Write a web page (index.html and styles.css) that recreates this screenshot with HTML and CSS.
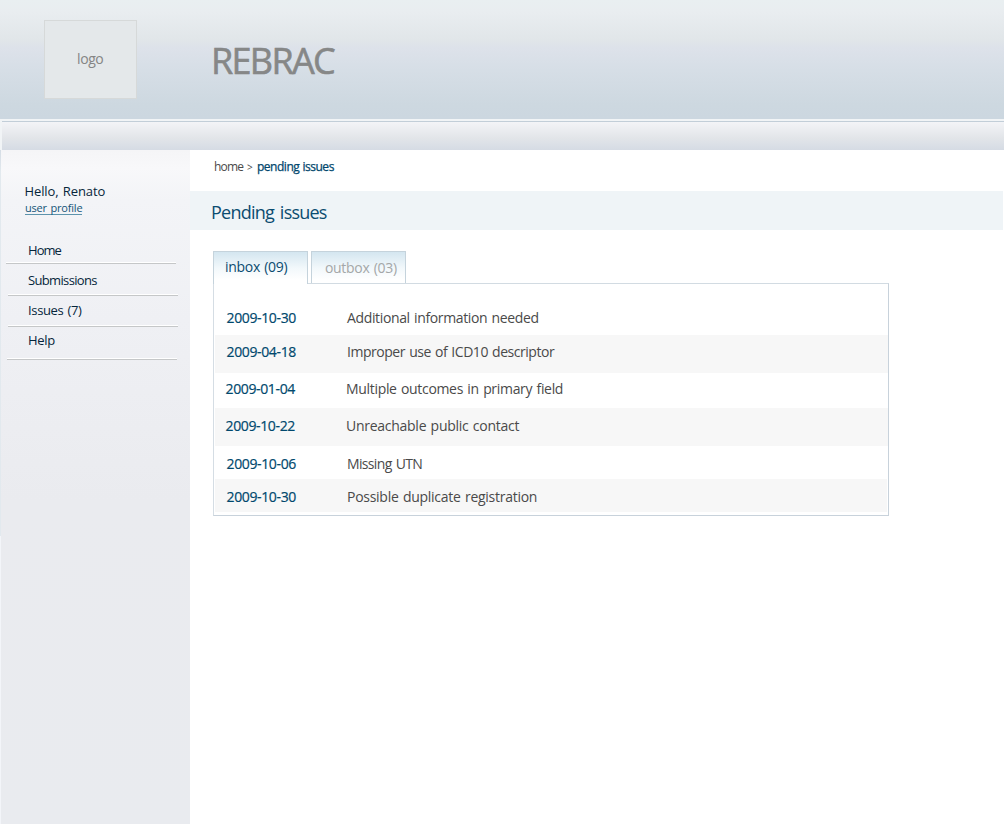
FILE: index.html
```html
<!DOCTYPE html>
<html lang="en">
<head>
<meta charset="utf-8">
<title>REBRAC - Pending issues</title>
<link rel="stylesheet" href="styles.css">
</head>
<body>
<header class="header">
  <div class="logo">logo</div>
  <h1 class="brand">REBRAC</h1>
</header>
<div class="bar"></div>
<div class="layout">
  <aside class="sidebar">
    <p class="hello">Hello, Renato</p>
    <a class="profile">user profile</a>
    <nav class="menu">
      <a class="item home">Home</a>
      <a class="item submissions">Submissions</a>
      <a class="item issues">Issues (7)</a>
      <a class="item help">Help</a>
    </nav>
  </aside>
  <main class="main">
    <div class="crumbs"><span class="crumb">home</span><span class="sep">&gt;</span><span class="current">pending issues</span></div>
    <h2 class="title">Pending issues</h2>
    <div class="tabs">
      <a class="tab active">inbox (09)</a>
      <a class="tab other">outbox (03)</a>
    </div>
    <div class="panel">
      <div class="row r1"><span class="date">2009-10-30</span><span class="text">Additional information needed</span></div>
      <div class="row r2"><span class="date">2009-04-18</span><span class="text">Improper use of ICD10 descriptor</span></div>
      <div class="row r3"><span class="date">2009-01-04</span><span class="text">Multiple outcomes in primary field</span></div>
      <div class="row r4"><span class="date">2009-10-22</span><span class="text">Unreachable public contact</span></div>
      <div class="row r5"><span class="date">2009-10-06</span><span class="text">Missing UTN</span></div>
      <div class="row r6"><span class="date">2009-10-30</span><span class="text">Possible duplicate registration</span></div>
    </div>
  </main>
</div>
</body>
</html>
```
FILE: styles.css
```css
* { box-sizing: border-box; }
body {
  margin: 0;
  height: 824px;
  overflow: hidden;
  display: flex;
  flex-direction: column;
  background: #fff;
  color: #4a4a4a;
  font: 14px/20px "Open Sans", "Noto Sans", sans-serif;
  white-space: nowrap;
}
h1, h2, p { margin: 0; font-weight: 400; }

.header {
  flex: none;
  height: 119px;
  display: flex;
  align-items: flex-start;
  padding: 20px 0 0 44px;
  background: linear-gradient(#e9eff1 0, #e9edf0 12px, #e1e6e9 40px, #dde2ea 48px, #d6dee6 70px, #cdd8e0 105px, #ccd7e0 119px);
}
.logo {
  width: 93px;
  height: 79px;
  padding: 28px 0 0 32px;
  border: 1px solid #d6d9d9;
  background: #e4e8ea;
  color: #858585;
  letter-spacing: -.4px;
}
.brand {
  margin: 18px 0 0 74px;
  font-size: 36px;
  line-height: 46px;
  letter-spacing: -1.7px;
  color: #868787;
  -webkit-text-stroke: .6px #868787;
}
.bar {
  flex: none;
  height: 31px;
  border-top: 2px solid #f1f4f6;
  border-left: 2px solid #f1f4f6;
  background: linear-gradient(#c2ced8 0 1px, #f3f4f7 1px, #e2e5e9 17px, #d5dbe4 100%);
}
.layout { flex: 1; display: flex; }
.sidebar {
  flex: none;
  width: 190px;
  padding-top: 31px;
  background:
    linear-gradient(#d5dde5 0, #e2e9ee 22px 386px, #f3f5f9 386px) left / 1px 100% no-repeat,
    linear-gradient(#f5f5f7 0, #f8f8fa 18px, #f3f4f7 50px, #eff0f4 170px, #eaebef 350px, #e9ebef 100%);
}
.hello { padding-left: 24.5px; font-size: 13px; letter-spacing: -.1px; word-spacing: 1px; color: #06263b; }
.profile {
  display: block;
  width: 57px;
  height: 15px;
  margin: -1px 0 0 25px;
  border-bottom: 1px solid #5d93ac;
  font-size: 11px;
  line-height: 16px;
  letter-spacing: -.2px;
  word-spacing: 1px;
  color: #145577;
}
.menu { padding: 25px 0 0 6px; }
.item {
  display: block;
  width: 170px;
  padding-left: 22px;
  font-size: 13px;
  color: #06263b;
  border-bottom: 1px solid #c5c7c8;
  box-shadow: inset 0 -1px #fff;
}
.home { height: 24px; letter-spacing: -.95px; }
.submissions { height: 32px; padding-top: 6px; margin-left: 2px; padding-left: 20px; letter-spacing: -.65px; }
.issues { height: 31px; padding-top: 4px; margin-left: 2px; padding-left: 20px; letter-spacing: -.35px; word-spacing: 1px; }
.help { height: 33px; padding-top: 3px; margin-left: 1px; padding-left: 21px; letter-spacing: -.3px; }

.main { flex: 1; }
.crumbs { height: 41px; display: flex; padding: 7px 0 0 24px; font-size: 12px; }
.crumb { width: 33px; letter-spacing: -.8px; }
.sep { width: 10px; font-size: 10px; }
.current { color: #00466c; letter-spacing: -.48px; word-spacing: .5px; -webkit-text-stroke: .25px #00466c; }
.title {
  height: 39px;
  margin-right: 1px;
  padding-left: 21px;
  background: #eff4f7;
  color: #0b4c70;
  font-size: 18px;
  line-height: 42px;
  letter-spacing: -.77px;
  word-spacing: 2px;
}
.tabs { display: flex; gap: 3px; padding: 21px 0 0 23px; }
.tab {
  width: 95px;
  height: 32px;
  padding-top: 5px;
  border: 1px solid #c5d3dc;
  border-bottom: 0;
  background: linear-gradient(#d4e6f0, #f2f8fb 16px, #fff 28px);
}
.active { position: relative; height: 33px; margin-bottom: -1px; padding-left: 11px; color: #0b4c70; letter-spacing: -.3px; word-spacing: 1px; }
.other { padding-top: 6px; padding-left: 13px; color: #a4a7a8; letter-spacing: -.32px; word-spacing: 1px; }
.panel {
  width: 676px;
  height: 233px;
  margin-left: 23px;
  padding: 0 0 0 1px;
  border: 1px solid #c8d2db;
  border-top-color: #d2dbe2;
  border-left-color: #d5dde4;
}
.row { display: flex; padding-left: 11.5px; word-spacing: 1px; }
.row:nth-child(even) { background: #f7f7f7; }
.date { width: 120.5px; color: #00486d; letter-spacing: -.36px; -webkit-text-stroke: .2px #00486d; }
.r1 { height: 51px; padding-top: 24px; }
.r1 .text { letter-spacing: -.36px; }
.r2 { height: 38px; padding-top: 7px; }
.r2 .text { letter-spacing: -.47px; }
.r3 { height: 35px; padding-top: 6px; padding-left: 10.5px; }
.r3 .text { letter-spacing: -.32px; }
.r4 { height: 38px; padding-top: 8px; padding-left: 10.5px; }
.r4 .text { letter-spacing: -.27px; }
.r5 { height: 33px; padding-top: 8px; }
.r5 .text { letter-spacing: -.65px; }
.r6 { height: 33px; padding-top: 8px; margin-right: 1px; }
.r6 .text { letter-spacing: -.27px; }
```
